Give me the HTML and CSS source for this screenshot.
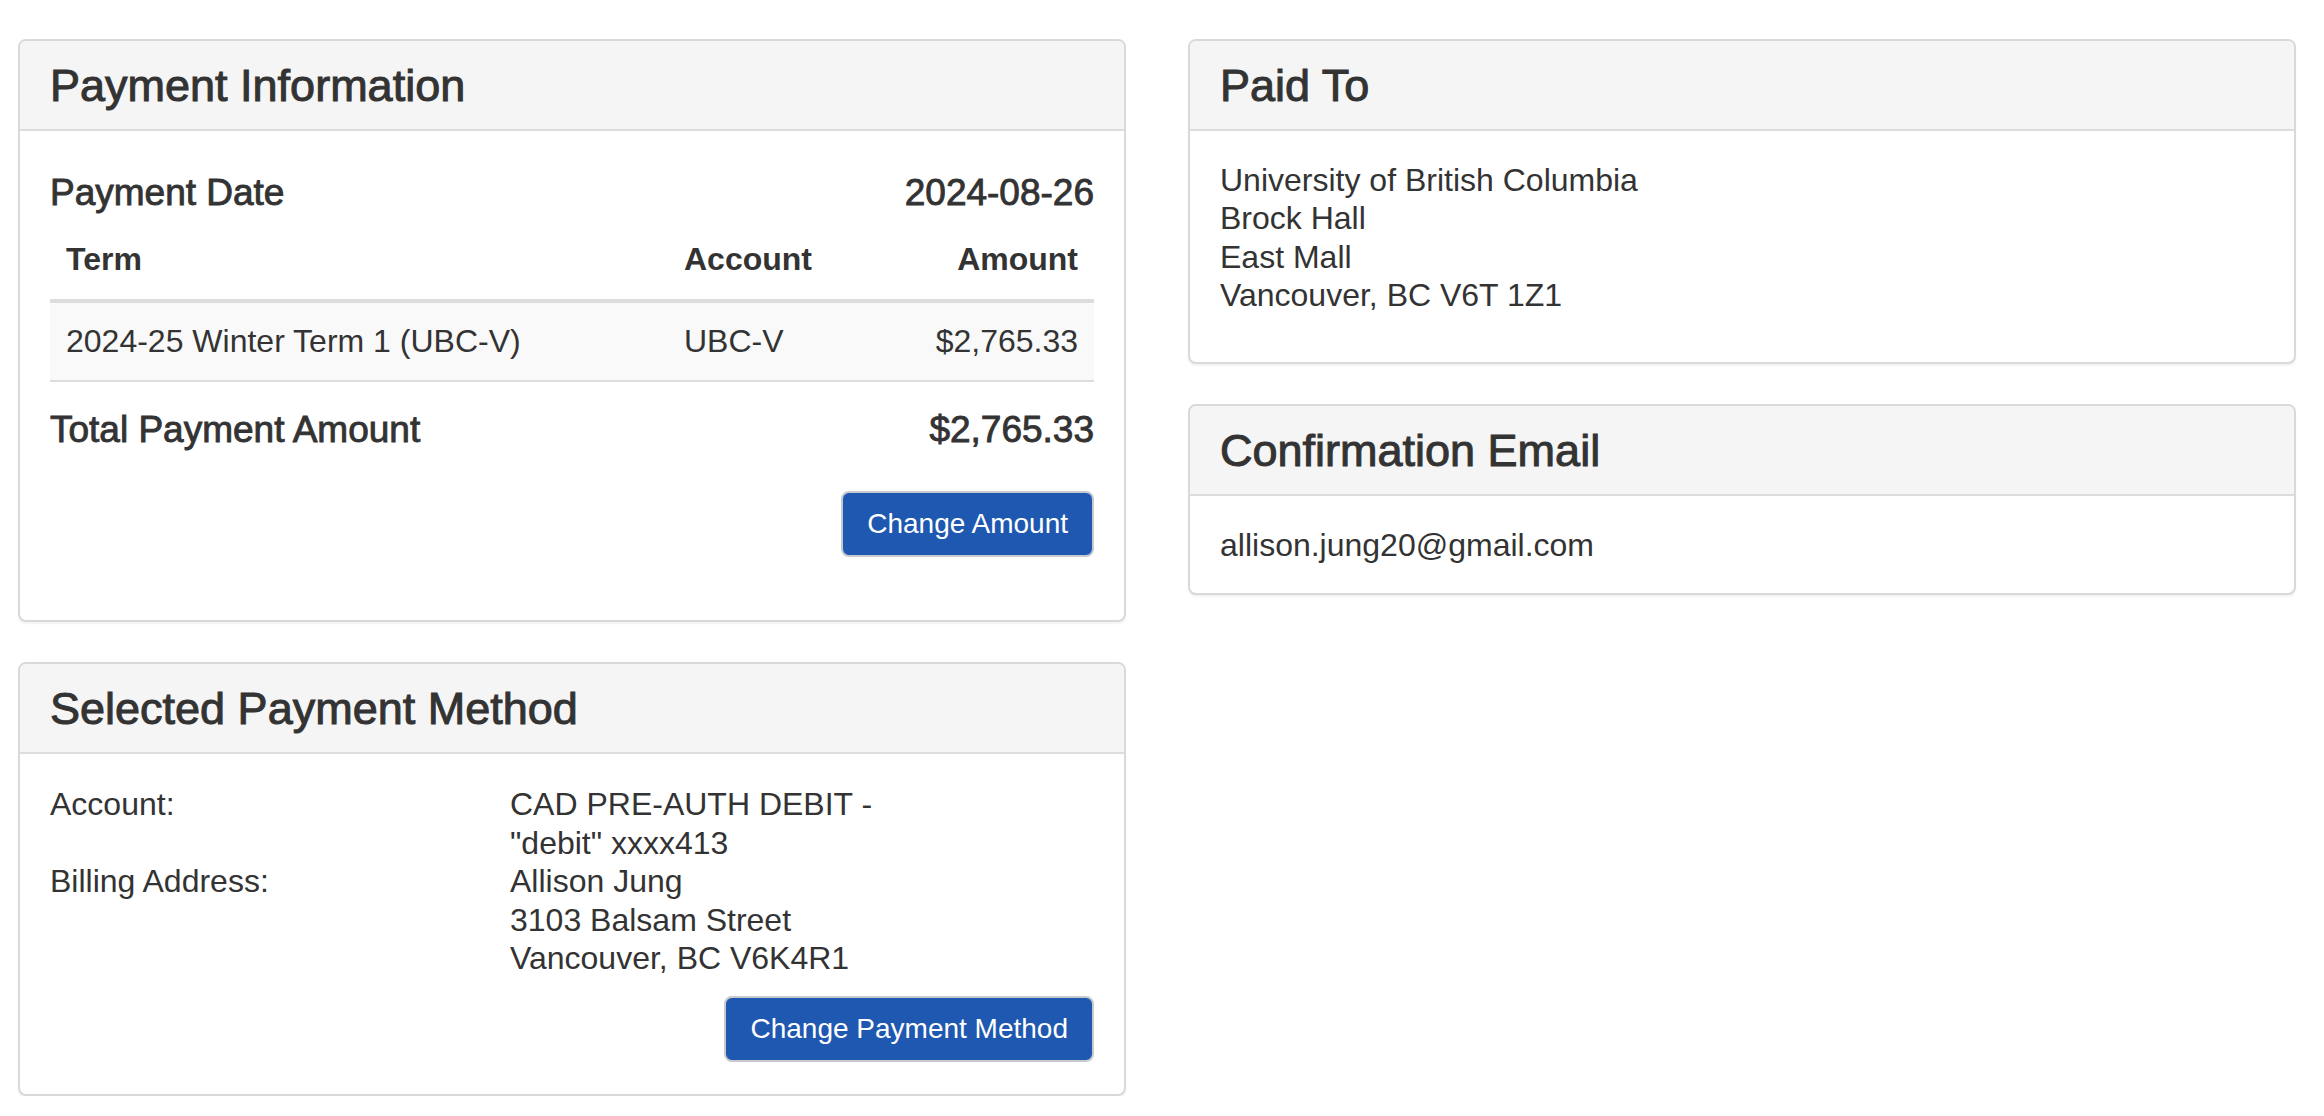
FILE: index.html
```html
<!DOCTYPE html>
<html lang="en">
<head>
<meta charset="utf-8">
<title>Payment Review</title>
<link rel="stylesheet" href="styles.css">
</head>
<body>
<div class="page">
  <div class="col">
    <section class="panel">
      <div class="panel-heading"><h3 class="panel-title">Payment Information</h3></div>
      <div class="panel-body pi-body">
        <div class="summary-row date-row"><h4>Payment Date</h4><h4>2024-08-26</h4></div>
        <table class="terms">
          <colgroup><col class="c-term"><col class="c-acct"><col class="c-amt"></colgroup>
          <thead>
            <tr><th>Term</th><th>Account</th><th class="num">Amount</th></tr>
          </thead>
          <tbody>
            <tr><td>2024-25 Winter Term 1 (UBC-V)</td><td>UBC-V</td><td class="num">$2,765.33</td></tr>
          </tbody>
        </table>
        <div class="summary-row total-row"><h4>Total Payment Amount</h4><h4>$2,765.33</h4></div>
        <div class="actions amount-actions"><button class="btn" type="button">Change Amount</button></div>
      </div>
    </section>

    <section class="panel">
      <div class="panel-heading"><h3 class="panel-title">Selected Payment Method</h3></div>
      <div class="panel-body pm-body">
        <div class="pm-grid">
          <div class="pm-label">Account:</div>
          <div class="pm-value">CAD PRE-AUTH DEBIT -<br>"debit" xxxx413</div>
          <div class="pm-label">Billing Address:</div>
          <div class="pm-value">Allison Jung<br>3103 Balsam Street<br>Vancouver, BC V6K4R1</div>
        </div>
        <div class="actions method-actions"><button class="btn" type="button">Change Payment Method</button></div>
      </div>
    </section>
  </div>

  <div class="col">
    <section class="panel">
      <div class="panel-heading"><h3 class="panel-title">Paid To</h3></div>
      <div class="panel-body">
        <address class="payee">University of British Columbia<br>Brock Hall<br>East Mall<br>Vancouver, BC V6T 1Z1</address>
      </div>
    </section>

    <section class="panel">
      <div class="panel-heading"><h3 class="panel-title">Confirmation Email</h3></div>
      <div class="panel-body email-body">
        <div class="email">allison.jung20@gmail.com</div>
      </div>
    </section>
  </div>
</div>
</body>
</html>
```

FILE: styles.css
```css
* { box-sizing: border-box; }

html, body {
  margin: 0;
  padding: 0;
  background: #ffffff;
}

body {
  font-family: "Liberation Sans", Arial, Helvetica, sans-serif;
  font-size: 32px;
  line-height: 38.4px;
  color: #333333;
}

.page {
  display: grid;
  grid-template-columns: 1108px 1108px;
  column-gap: 62px;
  padding: 39px 0 0 18px;
  align-items: start;
}

.col {
  display: flex;
  flex-direction: column;
  gap: 40px;
}

.panel {
  border: 2px solid #d9d9d9;
  border-radius: 8px;
  background: #ffffff;
  box-shadow: 0 2px 2px rgba(0, 0, 0, 0.05);
  overflow: hidden;
}

.panel-heading {
  background: #f5f5f5;
  border-bottom: 2px solid #dddddd;
  padding: 21px 30px 19px;
}

.panel-title {
  margin: 0;
  font-size: 45px;
  line-height: 48px;
  font-weight: 400;
  -webkit-text-stroke: 1px #333333;
}

.panel-body {
  padding: 30px;
}

/* Payment information */
.summary-row {
  display: flex;
  justify-content: space-between;
  align-items: baseline;
}

.summary-row h4 {
  margin: 0;
  font-size: 37px;
  line-height: 41px;
  font-weight: 400;
  -webkit-text-stroke: 0.9px #333333;
}

.date-row { margin-top: 11px; }
.total-row { margin-top: 27px; }

.terms {
  width: 100%;
  table-layout: fixed;
  border-collapse: collapse;
  margin-top: 8px;
  line-height: 45.7px;
}

.c-term { width: 618px; }
.c-acct { width: 240px; }

.terms th,
.terms td {
  padding: 16px;
  text-align: left;
  vertical-align: top;
}

.terms th {
  font-weight: 700;
  border-bottom: 4px solid #dddddd;
}

.terms td {
  background: #f9f9f9;
  border-bottom: 2px solid #dddddd;
}

.terms .num { text-align: right; }

.actions {
  display: flex;
  justify-content: flex-end;
}

.amount-actions {
  margin-top: 41px;
  margin-bottom: 33px;
}

.btn {
  font-family: "Liberation Sans", Arial, Helvetica, sans-serif;
  font-size: 28px;
  line-height: 40px;
  padding: 11px 24px;
  color: #ffffff;
  background: #1f58b0;
  border: 2px solid #c6c9ce;
  border-radius: 8px;
  cursor: pointer;
}

/* Payment method */
.pm-body {
  padding-top: 31px;
  padding-bottom: 32px;
}

.pm-grid {
  display: grid;
  grid-template-columns: 460px 1fr;
}

.method-actions { margin-top: 19px; }

/* Paid to */
.payee {
  font-style: normal;
  margin: 0 0 17px;
}

.email-body { padding-bottom: 29px; }
```
